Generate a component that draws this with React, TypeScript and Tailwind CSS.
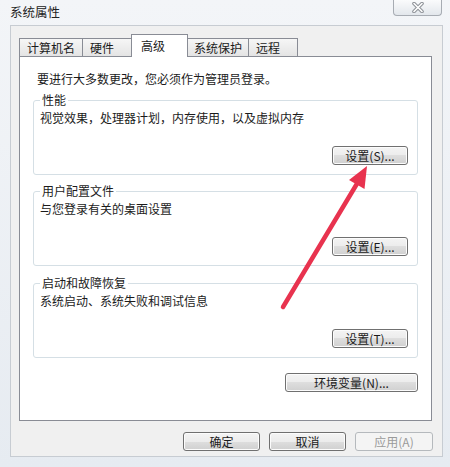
const btn =
  "flex items-center justify-center rounded-[3px] border border-[#707070] bg-[linear-gradient(#f4f4f4_0%,#ececec_50%,#dedede_50%,#d0d0d0_100%)] text-[12px] leading-none text-[#1b1b1b] shadow-[inset_0_0_0_1px_#fcfcfc]";

const tab =
  "flex h-[18px] items-center border border-b-0 border-[#898c95] bg-[linear-gradient(#f6f6f6,#e4e4e4)] pl-[7px] text-[12px] leading-none";

function Group({ title, desc, action }: { title: string; desc: string; action: string }) {
  return (
    <fieldset className="rounded-[3px] border border-[#d5dfe5] pl-[6px] pr-[9px] pb-[9px]">
      <legend className="px-[2px] leading-[16px]">{title}</legend>
      <div className="mt-[2px] leading-[16px]">{desc}</div>
      <div className="mt-[20px] flex justify-end">
        <button className={`${btn} h-[19px] w-[76px]`}>{action}</button>
      </div>
    </fieldset>
  );
}

export default function App() {
  return (
    <div className="relative h-[467px] w-[450px] overflow-hidden bg-[linear-gradient(180deg,#f3f5f8,#e6ebf1)] font-['Noto_Sans_CJK_SC',sans-serif] text-[12px] leading-[16px] text-[#1b1b1b]">
      {/* title bar */}
      <div className="flex h-[25px] items-start justify-between pl-[10px]">
        <span className="mt-[4px] text-[12.5px] text-[#222]">系统属性</span>
        <div className="mr-[8px] flex h-[16px] w-[49px] items-center justify-center rounded-b-[4px] border border-t-0 border-[#a7acb3] bg-[linear-gradient(#fafbfc,#e3e7ec)]">
          <svg width="12" height="11" viewBox="0 0 12 11">
            <path d="M2 1.5 L10 9.5 M10 1.5 L2 9.5" stroke="#8d9197" strokeWidth="3.6" strokeLinecap="round" />
            <path d="M2 1.5 L10 9.5 M10 1.5 L2 9.5" stroke="#ffffff" strokeWidth="1.6" strokeLinecap="round" />
          </svg>
        </div>
      </div>

      {/* client area */}
      <div className="ml-[10px] mr-[7px] flex h-[432px] flex-col border border-[#c7ccd2] bg-[#f0f0f0] pl-[8px] pr-[10px] pt-[7px]">
        {/* tabs */}
        <div className="flex h-[23px] items-end">
          <div className={`${tab} w-[64px]`}>计算机名</div>
          <div className={`${tab} -ml-px w-[51px]`}>硬件</div>
          <div className="relative z-10 -mb-px -ml-[2px] flex h-[23px] w-[57px] items-center border border-b-0 border-[#898c95] bg-white pl-[9px] pb-[1px] leading-none">
            高级
          </div>
          <div className={`${tab} -ml-[2px] w-[63px]`}>系统保护</div>
          <div className={`${tab} -ml-px w-[50px]`}>远程</div>
        </div>

        {/* panel */}
        <div className="flex h-[365px] flex-col border border-[#898c95] bg-white px-[13px] pt-[14px]">
          <div className="pl-[4px] leading-[16px]">要进行大多数更改，您必须作为管理员登录。</div>
          <div className="mt-[5px]">
            <Group title="性能" desc="视觉效果，处理器计划，内存使用，以及虚拟内存" action="设置(S)..." />
          </div>
          <div className="mt-[8px]">
            <Group title="用户配置文件" desc="与您登录有关的桌面设置" action="设置(E)..." />
          </div>
          <div className="mt-[9px]">
            <Group title="启动和故障恢复" desc="系统启动、系统失败和调试信息" action="设置(T)..." />
          </div>
          <div className="mt-[15px] flex justify-end">
            <button className={`${btn} h-[19px] w-[133px]`}>环境变量(N)...</button>
          </div>
        </div>

        {/* dialog buttons */}
        <div className="-mr-px mt-[11px] flex justify-end gap-[9px]">
          <button className={`${btn} h-[19px] w-[77px]`}>确定</button>
          <button className={`${btn} h-[19px] w-[77px]`}>取消</button>
          <button className="flex h-[19px] w-[78px] items-center justify-center rounded-[3px] border border-[#b5b9bd] bg-[#f4f4f4] text-[12px] leading-none text-[#9a9a9a]">
            应用(A)
          </button>
        </div>
      </div>

      {/* red annotation arrow */}
      <svg className="pointer-events-none absolute left-0 top-0" width="450" height="467" viewBox="0 0 450 467">
        <line x1="283" y1="307" x2="358" y2="182" stroke="#e8334f" strokeWidth="4.5" strokeLinecap="round" />
        <polygon points="367,166 364.5,189 349,180" fill="#e8334f" />
      </svg>
    </div>
  );
}
